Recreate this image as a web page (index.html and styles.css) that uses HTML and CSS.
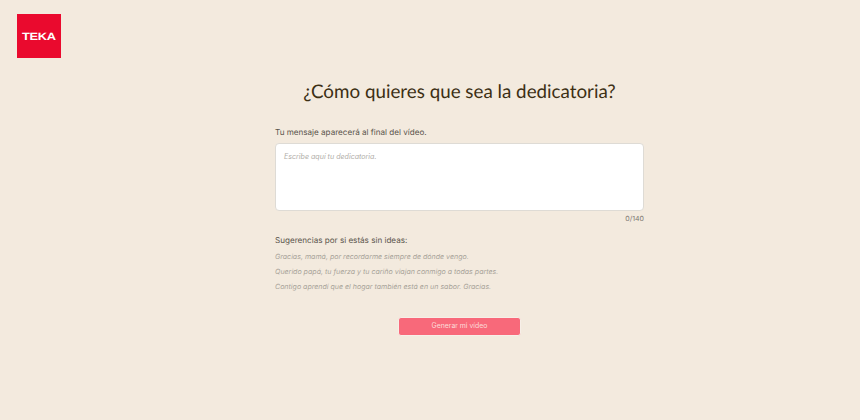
FILE: index.html
```html
<!DOCTYPE html>
<html lang="es">
<head>
<meta charset="utf-8">
<title>Dedicatoria</title>
<link rel="stylesheet" href="styles.css">
</head>
<body>
<div class="page">
  <header class="header">
    <div class="logo"><span class="logo-text">TEKA</span></div>
  </header>
  <main class="main">
    <h1 class="title">¿Cómo quieres que sea la dedicatoria?</h1>
    <form class="form">
      <label class="label" for="msg">Tu mensaje aparecerá al final del vídeo.</label>
      <textarea class="input" id="msg" placeholder="Escribe aquí tu dedicatoria."></textarea>
      <div class="counter">0/140</div>
      <p class="label suggest-title">Sugerencias por si estás sin ideas:</p>
      <ul class="suggestions">
        <li>Gracias, mamá, por recordarme siempre de dónde vengo.</li>
        <li>Querido papá, tu fuerza y tu cariño viajan conmigo a todas partes.</li>
        <li>Contigo aprendí que el hogar también está en un sabor. Gracias.</li>
      </ul>
      <div class="actions"><button class="button" type="button">Generar mi vídeo</button></div>
    </form>
  </main>
</div>
</body>
</html>
```
FILE: styles.css
```css
* { box-sizing: border-box; }
html, body { margin: 0; height: 100%; }
body {
  background: #f3eade;
  font-family: "Inter", "Liberation Sans", sans-serif;
  color: #4f4a43;
  overflow: hidden;
  text-rendering: geometricPrecision;
}
.page { height: 420px; display: flex; flex-direction: column; }
.header { padding: 14px 17px 0; height: 58px; }
.logo {
  width: 44px; height: 44px;
  background: #ea0a2e;
  display: flex; align-items: center; justify-content: center;
}
.logo-text {
  color: #fff;
  font-family: "Liberation Sans", sans-serif;
  font-weight: 700;
  font-size: 10.5px;
  letter-spacing: -0.2px;
  transform: scaleX(1.22);
  position: relative; top: 1px;
}
.main { display: flex; flex-direction: column; align-items: center; padding-left: 59px; }
.title {
  margin: 20px 0 0;
  font-family: "Lato", sans-serif;
  font-weight: 400;
  font-size: 18.8px;
  line-height: 28px;
  color: #3c2f14;
  text-align: center;
}
.form { width: 369px; margin-top: 20px; display: flex; flex-direction: column; }
.label {
  display: block;
  margin: 0;
  font-size: 8.1px;
  line-height: 13px;
  color: #5a544c;
}
.input {
  display: block;
  margin-top: 4px;
  width: 369px; height: 68px;
  resize: none;
  background: #fff;
  border: 1px solid #dedbd5;
  border-radius: 4px;
  padding: 7px 8px;
  font: italic 7.1px/11px "Inter", sans-serif;
  outline: none;
}
.input::placeholder { color: #b0ada8; opacity: 1; }
.counter { margin-top: 3px; text-align: right; font-size: 7px; line-height: 10px; color: #7b7771; }
.suggest-title { margin-top: 10px; }
.suggestions {
  list-style: none; margin: 4px 0 0; padding: 0;
  display: flex; flex-direction: column; gap: 4px;
  font-size: 7.05px; line-height: 11px; font-style: italic; color: #a8a399;
}
.actions { display: flex; justify-content: center; margin-top: 25px; }
.button {
  width: 123px; height: 19px;
  background: #f8697a;
  border: 1px solid #f7efe8;
  border-radius: 3px;
  color: #fcdcd9;
  font: 400 6.9px/1 "Inter", sans-serif;
  padding: 0;
}
```
